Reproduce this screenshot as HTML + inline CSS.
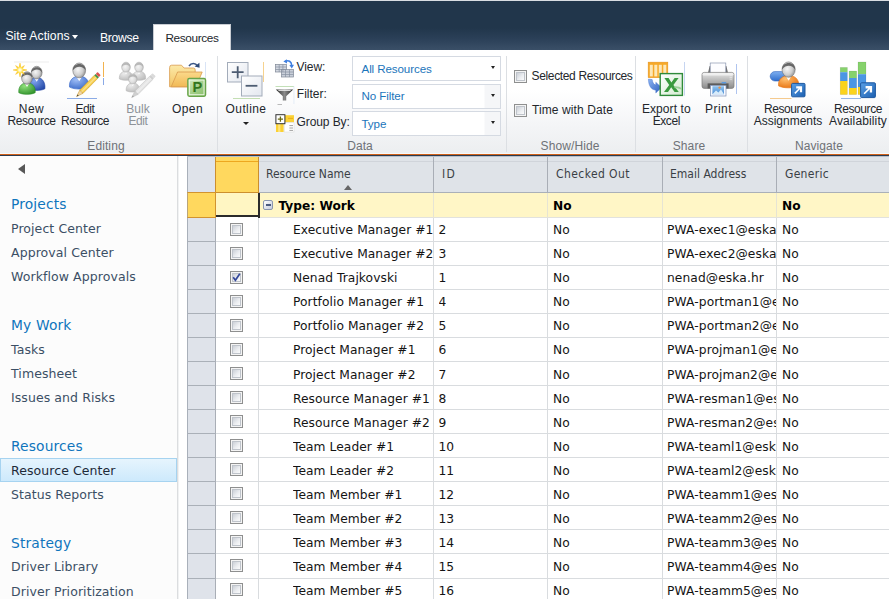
<!DOCTYPE html>
<html><head><meta charset="utf-8"><title>Resource Center</title>
<style>
html,body{margin:0;padding:0}
body{width:889px;height:599px;overflow:hidden;position:relative;background:#fff;font-family:"Liberation Sans",sans-serif;}
i,b,u,span{font-style:normal;text-decoration:none}
/* ---------- top bar ---------- */
#topbar{position:absolute;left:0;top:0;width:889px;height:50px;background:linear-gradient(#21364b 0,#21364b 27px,#2b4058 38px,#3a4f67 49px,#2c4057 49.5px);border-top:1px solid #d9dde2;box-sizing:border-box}
#topbar .t{position:absolute;color:#fff;font-size:12.2px;letter-spacing:-0.1px;white-space:nowrap;line-height:14px}
#tab{position:absolute;left:153px;top:24px;width:78px;height:27px;background:#fff;border:1px solid #c9cdd3;border-bottom:0;box-sizing:border-box}
#tab span{position:absolute;left:0;width:100%;text-align:center;top:6px;font-size:11.8px;color:#23272c;line-height:14px;letter-spacing:-0.36px}
.dd{position:absolute;width:0;height:0;border-left:3.5px solid transparent;border-right:3.5px solid transparent;border-top:4px solid #fff}
/* ---------- ribbon ---------- */
#ribbon{position:absolute;left:0;top:50px;width:889px;height:104px;background:linear-gradient(#fff 0,#fff 40px,#f4f5f7 75px,#eceef0 104px);}
#rline0{position:absolute;left:0;top:153px;width:889px;height:1px;background:#f7f8f9}
#rline1{position:absolute;left:0;top:154px;width:889px;height:1px;background:#cf5f18}
#rline2{position:absolute;left:0;top:155px;width:889px;height:1px;background:#2a3a4e}
.sep{position:absolute;top:56px;width:1px;height:96px;background:#dcdfe3}
.big{position:absolute;top:102.5px;width:80px;text-align:center;font-size:12px;line-height:12px;color:#23272c;letter-spacing:-0.42px;white-space:nowrap}
.big.dis{color:#8d9299}
.glabel{position:absolute;top:139px;width:100px;text-align:center;font-size:12px;line-height:14px;color:#6e7277;letter-spacing:0.1px;white-space:nowrap}
.ico{position:absolute;width:32px;height:32px}
.lbl{position:absolute;font-size:12px;line-height:14px;color:#23272c;letter-spacing:-0.32px;white-space:nowrap}
.sel{position:absolute;left:352px;width:149px;height:25px;box-sizing:border-box;border:1px solid #d5dae2;background:#fff}
.sel.g{background:linear-gradient(90deg,#fff 0,#fff 131px,#f5f6f8 132px)}
.sel span{position:absolute;left:8.5px;top:5px;font-size:11.6px;line-height:14px;color:#1b75bb;letter-spacing:-0.1px;white-space:nowrap}
.sel i{position:absolute;right:4.6px;top:9.4px;width:0;height:0;border-left:2.9px solid transparent;border-right:2.9px solid transparent;border-top:3.4px solid #222}
.chk{position:absolute;left:514px;width:13px;height:13px;box-sizing:border-box;border:1px solid #8e8f8f;background:linear-gradient(135deg,#c4c9d1 10%,#eceef1 55%,#fff 90%);box-shadow:inset 0 0 0 1px #f4f4f4, inset 0 0 0 2px #bfc4cb}
/* ---------- sidebar ---------- */
#side{position:absolute;left:0;top:156px;width:177px;height:443px;background:#fcfcfc;border-right:1px solid #dbdddf}
#side2{position:absolute;left:178px;top:156px;width:1px;height:443px;background:#f1f2f3}
#side .h{position:absolute;left:11px;font-family:"DejaVu Sans",sans-serif;font-size:13.8px;letter-spacing:0.15px;color:#0f75bd;line-height:18px;white-space:nowrap}
#side .a{position:absolute;left:11px;font-family:"DejaVu Sans",sans-serif;font-size:12.5px;letter-spacing:0.08px;color:#3b4f65;line-height:16px;white-space:nowrap}
#side .cur{position:absolute;left:0;top:302px;width:177px;height:24px;box-sizing:border-box;border:1px solid #a6d3f0;background:linear-gradient(#e6f4fd,#cde9fc)}
#back{position:absolute;left:18.3px;top:164px;width:0;height:0;border-top:5px solid transparent;border-bottom:5px solid transparent;border-right:7px solid #585858}
/* ---------- grid ---------- */
#grid{position:absolute;left:0;top:0;width:889px;height:599px;font-family:"DejaVu Sans",sans-serif;font-size:12.25px;color:#141414;overflow:hidden}
.rh{position:absolute;left:187px;width:29px;background:#dfe3ea;border-left:1px solid #a9b0ba;border-right:1px solid #c98a2a;box-sizing:border-box}
.hsel{position:absolute;left:215px;top:157px;width:44px;height:36px;box-sizing:border-box;background:#ffd85e;border:1px solid #cc8f2e;border-top:0}
.hsel:before{content:"";position:absolute;left:0;right:0;top:4px;height:1px;background:#eda71f}
.hdr{position:absolute;top:157px;height:35px;background:#dfe3e8;border-bottom:1px solid #aab0b8;border-right:1px solid #a9aeb6;font-family:"DejaVu Sans Condensed","DejaVu Sans",sans-serif;font-size:12px;color:#3a3f45}
.hdr:before{content:"";position:absolute;left:0;right:0;top:4px;height:1px;background:#d0d4da}
.hdr span{position:absolute;left:7px;top:10px;line-height:14px;white-space:nowrap}
.sort{position:absolute;left:85px;top:28px;width:0;height:0;border-left:4px solid transparent;border-right:4px solid transparent;border-bottom:5px solid #666}
.grow{position:absolute;left:0;top:193px;width:889px;height:25px;}
.grow:before{content:"";position:absolute;left:259px;right:0;top:0;height:24px;background:#fff6c6;border-bottom:1px solid #e2e2de}
.grow b{position:absolute;top:6px;line-height:14px;font-weight:bold;color:#000;white-space:nowrap;font-size:12.2px}
.grow u{position:absolute;top:0;width:1px;height:25px;background:#e6e4d4}
.rhsel{position:absolute;left:187px;top:-1px;width:29px;height:26px;box-sizing:border-box;background:#ffd85e;border:1px solid #d2932f;border-left-color:#b9a57a}
.gsel{position:absolute;left:216px;top:0;width:43.6px;height:24px;box-sizing:border-box;background:#fff6c3;border-right:2.6px solid #2b2b2b;border-bottom:2px solid #2b2b2b}
.gsel:after{content:"";position:absolute;right:-2px;bottom:-3px;width:2px;height:1px;background:#2b2b2b}
.coll{position:absolute;left:263px;top:7px;width:10px;height:10px;box-sizing:border-box;border:1px solid #8a96b0;border-radius:2px;background:linear-gradient(135deg,#fff,#c4cbdc)}
.coll:before{content:"";position:absolute;left:1.5px;top:3px;width:5px;height:2px;background:#4a5a7e}
.row{position:absolute;left:0;width:889px;height:24px}
.row:after{content:"";position:absolute;left:187px;right:0;bottom:0;height:1px;background:#d9dcdf}
.row span{position:absolute;top:5px;line-height:14px;white-space:nowrap;overflow:hidden}
.rh2{position:absolute;left:187px;top:0;width:29px;height:24px;background:#dfe3ea;border-left:1px solid #a9b0ba;border-right:1px solid #a9aeb6;border-bottom:1px solid #aab0b8;box-sizing:border-box;z-index:2}
.c1{left:293px;width:140px;letter-spacing:0.06px}.c2{left:438.5px}.c3{left:553px}.c4{left:667px;width:109px;letter-spacing:0.1px}.c5{left:782px}
.cb{position:absolute;left:230px;top:5px;width:13px;height:13px;box-sizing:border-box;border:1px solid #8e8f8f;background:linear-gradient(135deg,#c4c9d1 10%,#eceef1 55%,#fff 90%);box-shadow:inset 0 0 0 1px #f4f4f4, inset 0 0 0 2px #bfc4cb}
.cb svg{position:absolute;left:-1px;top:-1px;width:13px;height:13px}
.vl{position:absolute;top:218px;width:1px;height:382px;background:#d9dcdf}

#gtop{position:absolute;left:187px;top:156px;width:702px;height:1px;background:#b7bec9}
#side .a.on{color:#1e2a38}

</style></head><body>
<div id="topbar">
<span class="t" style="left:5.4px;top:28px;letter-spacing:0.05px">Site Actions</span><i class="dd" style="left:72.4px;top:34.4px"></i>
<span class="t" style="left:100px;top:30px;letter-spacing:-0.3px">Browse</span>
</div>
<div id="tab"><span>Resources</span></div>
<div id="ribbon"></div>
<div id="rline0"></div><div id="rline1"></div><div id="rline2"></div>
<div class="sep" style="left:217px"></div><div class="sep" style="left:506px"></div><div class="sep" style="left:635px"></div><div class="sep" style="left:747px"></div>
<div class="big" style="left:-8.5px"><span style="letter-spacing:0.5px">New</span><br>Resource</div>
<div class="big" style="left:45px">Edit<br>Resource</div>
<div class="big dis" style="left:98px"><span style="letter-spacing:0.1px">Bulk</span><br>Edit</div>
<div class="big" style="left:147.5px"><span style="letter-spacing:0.4px">Open</span></div>
<div class="big" style="left:206px"><span style="letter-spacing:0.4px">Outline</span></div><i class="dd" style="left:242.9px;top:121.8px;border-top-color:#222;border-width:3.5px 3px 0 3px"></i>
<div class="big" style="left:626.3px"><span style="letter-spacing:0.08px">Export to</span><br>Excel</div>
<div class="big" style="left:678.5px"><span style="letter-spacing:0.5px">Print</span></div>
<div class="big" style="left:748px">Resource<br><span style="letter-spacing:0px">Assignments</span></div>
<div class="big" style="left:818px">Resource<br><span style="letter-spacing:0.13px">Availability</span></div>
<div class="glabel" style="left:56px">Editing</div>
<div class="glabel" style="left:310px">Data</div>
<div class="glabel" style="left:520px">Show/Hide</div>
<div class="glabel" style="left:639px">Share</div>
<div class="glabel" style="left:769px">Navigate</div>
<span class="lbl" style="left:296.6px;top:60px;letter-spacing:-0.1px">View:</span>
<span class="lbl" style="left:296.8px;top:87px;letter-spacing:0px">Filter:</span>
<span class="lbl" style="left:296.6px;top:115px;letter-spacing:-0.1px">Group By:</span>
<div class="sel" style="top:56px"><span>All Resources</span><i></i></div>
<div class="sel g" style="top:84px"><span style="top:4px">No Filter</span><i></i></div>
<div class="sel g" style="top:111px"><span>Type</span><i></i></div>
<i class="chk" style="top:70px"></i><span class="lbl" style="left:531.6px;top:69px;letter-spacing:-0.36px">Selected Resources</span>
<i class="chk" style="top:104px"></i><span class="lbl" style="left:532px;top:103px;letter-spacing:0.1px">Time with Date</span>

<svg id="icons" width="889" height="160" viewBox="0 0 889 160" style="position:absolute;left:0;top:0;pointer-events:none"><defs><radialGradient id="p1h" cx="0.4" cy="0.45" r="0.7"><stop offset="0" stop-color="#f6f6f6"/><stop offset="0.55" stop-color="#cfcfcf"/><stop offset="1" stop-color="#7c7c7c"/></radialGradient><radialGradient id="p1b" cx="0.35" cy="0.3" r="0.8"><stop offset="0" stop-color="#7fa4ee"/><stop offset="1" stop-color="#2347a5"/></radialGradient><radialGradient id="p2h" cx="0.4" cy="0.45" r="0.7"><stop offset="0" stop-color="#f6f6f6"/><stop offset="0.55" stop-color="#cfcfcf"/><stop offset="1" stop-color="#7c7c7c"/></radialGradient><radialGradient id="p2b" cx="0.35" cy="0.3" r="0.8"><stop offset="0" stop-color="#8fe07a"/><stop offset="1" stop-color="#2e8f2a"/></radialGradient><radialGradient id="p3h" cx="0.4" cy="0.45" r="0.7"><stop offset="0" stop-color="#f6f6f6"/><stop offset="0.55" stop-color="#cfcfcf"/><stop offset="1" stop-color="#7c7c7c"/></radialGradient><radialGradient id="p3b" cx="0.35" cy="0.3" r="0.8"><stop offset="0" stop-color="#9dbcf5"/><stop offset="1" stop-color="#3868c8"/></radialGradient><radialGradient id="p4h" cx="0.4" cy="0.45" r="0.7"><stop offset="0" stop-color="#f4f4f4"/><stop offset="0.55" stop-color="#dedede"/><stop offset="1" stop-color="#b4b4b4"/></radialGradient><radialGradient id="p4b" cx="0.35" cy="0.3" r="0.8"><stop offset="0" stop-color="#ececec"/><stop offset="1" stop-color="#b9b9b9"/></radialGradient><radialGradient id="p5h" cx="0.4" cy="0.45" r="0.7"><stop offset="0" stop-color="#f4f4f4"/><stop offset="0.55" stop-color="#dedede"/><stop offset="1" stop-color="#b4b4b4"/></radialGradient><radialGradient id="p5b" cx="0.35" cy="0.3" r="0.8"><stop offset="0" stop-color="#ececec"/><stop offset="1" stop-color="#b9b9b9"/></radialGradient><radialGradient id="p6h" cx="0.4" cy="0.45" r="0.7"><stop offset="0" stop-color="#f4f4f4"/><stop offset="0.55" stop-color="#dedede"/><stop offset="1" stop-color="#b4b4b4"/></radialGradient><radialGradient id="p6b" cx="0.35" cy="0.3" r="0.8"><stop offset="0" stop-color="#ececec"/><stop offset="1" stop-color="#b9b9b9"/></radialGradient><linearGradient id="fo1" x1="0" y1="0" x2="0" y2="1"><stop offset="0" stop-color="#fce9a8"/><stop offset="1" stop-color="#f3c565"/></linearGradient><linearGradient id="fo2" x1="0" y1="0" x2="0" y2="1"><stop offset="0" stop-color="#fbd98a"/><stop offset="1" stop-color="#f1b955"/></linearGradient><linearGradient id="pg" x1="0" y1="0" x2="1" y2="1"><stop offset="0" stop-color="#d9ecc9"/><stop offset="0.5" stop-color="#a5d08a"/><stop offset="1" stop-color="#86bd68"/></linearGradient><linearGradient id="ob" x1="0" y1="0" x2="1" y2="1"><stop offset="0" stop-color="#fff"/><stop offset="1" stop-color="#e3e7ef"/></linearGradient><linearGradient id="fu" x1="0" y1="0" x2="1" y2="0"><stop offset="0" stop-color="#2a2a2a"/><stop offset="0.5" stop-color="#8a8a8a"/><stop offset="1" stop-color="#2a2a2a"/></linearGradient><linearGradient id="xa" x1="0" y1="0" x2="1" y2="1"><stop offset="0" stop-color="#8db4f0"/><stop offset="1" stop-color="#2c5fc0"/></linearGradient><linearGradient id="xg" x1="0" y1="0" x2="1" y2="1"><stop offset="0" stop-color="#fff"/><stop offset="1" stop-color="#d3ead0"/></linearGradient><linearGradient id="pr" x1="0" y1="0" x2="0" y2="1"><stop offset="0" stop-color="#e9e9e9"/><stop offset="0.45" stop-color="#bdbdbd"/><stop offset="1" stop-color="#8b8b8b"/></linearGradient><linearGradient id="pp" x1="0" y1="0" x2="0" y2="1"><stop offset="0" stop-color="#8fc2ee"/><stop offset="1" stop-color="#4e8fd6"/></linearGradient><linearGradient id="pill" x1="0" y1="0" x2="0" y2="1"><stop offset="0" stop-color="#7fb0f0"/><stop offset="1" stop-color="#2f6dcc"/></linearGradient><radialGradient id="p7h" cx="0.4" cy="0.45" r="0.7"><stop offset="0" stop-color="#f6f6f6"/><stop offset="0.55" stop-color="#cfcfcf"/><stop offset="1" stop-color="#7c7c7c"/></radialGradient><radialGradient id="p7b" cx="0.35" cy="0.3" r="0.8"><stop offset="0" stop-color="#ffc070"/><stop offset="1" stop-color="#e66f0c"/></radialGradient><linearGradient id="sc1" x1="0" y1="0" x2="1" y2="1"><stop offset="0" stop-color="#5aa0e6"/><stop offset="1" stop-color="#1c5fb0"/></linearGradient><linearGradient id="sc2" x1="0" y1="0" x2="1" y2="1"><stop offset="0" stop-color="#5aa0e6"/><stop offset="1" stop-color="#1c5fb0"/></linearGradient></defs><path d="M28.5 88.8 C27.7 81.3 32.2 77.3 36.7 77.3 C41.2 77.3 45.7 81.3 44.9 88.8 C40.8 91.0 32.6 91.0 28.5 88.8Z" fill="url(#p1b)" stroke="#2347a5" stroke-width="0.6"/><path d="M34.3 77.9 L36.7 81.7 L39.1 77.9Z" fill="#fff" opacity="0.95"/><ellipse cx="36.7" cy="72.6" rx="5.4" ry="6.3" fill="url(#p1h)" stroke="#777" stroke-width="0.6"/><path d="M31.3 72.4 C31.3 65.4 42.1 65.4 42.1 72.4 C39.9 69.1 35.1 67.9 31.3 72.4Z" fill="#555" opacity="0.85"/><path d="M18.8 92.7 C18.0 86.2 22.5 82.7 27.0 82.7 C31.5 82.7 36.0 86.2 35.2 92.7 C31.1 94.9 22.9 94.9 18.8 92.7Z" fill="url(#p2b)" stroke="#2e8f2a" stroke-width="0.6"/><path d="M24.6 83.3 L27.0 87.1 L29.4 83.3Z" fill="#fff" opacity="0.95"/><ellipse cx="27.0" cy="78.0" rx="5.4" ry="6.3" fill="url(#p2h)" stroke="#777" stroke-width="0.6"/><path d="M21.6 77.8 C21.6 70.8 32.4 70.8 32.4 77.8 C30.2 74.5 25.4 73.3 21.6 77.8Z" fill="#555" opacity="0.85"/><path d="M22.2 71.0 L26.9 70.0 L22.2 69.0Z" fill="#ffd42a" stroke="#f6bf1e" stroke-width="0.5"/><path d="M20.9 72.2 L24.4 74.4 L22.2 70.9Z" fill="#ffd42a" stroke="#f6bf1e" stroke-width="0.5"/><path d="M19.0 72.2 L20.0 76.9 L21.0 72.2Z" fill="#ffd42a" stroke="#f6bf1e" stroke-width="0.5"/><path d="M17.8 70.9 L15.6 74.4 L19.1 72.2Z" fill="#ffd42a" stroke="#f6bf1e" stroke-width="0.5"/><path d="M17.8 69.0 L13.1 70.0 L17.8 71.0Z" fill="#ffd42a" stroke="#f6bf1e" stroke-width="0.5"/><path d="M19.1 67.8 L15.6 65.6 L17.8 69.1Z" fill="#ffd42a" stroke="#f6bf1e" stroke-width="0.5"/><path d="M21.0 67.8 L20.0 63.1 L19.0 67.8Z" fill="#ffd42a" stroke="#f6bf1e" stroke-width="0.5"/><path d="M22.2 69.1 L24.4 65.6 L20.9 67.8Z" fill="#ffd42a" stroke="#f6bf1e" stroke-width="0.5"/><circle cx="20" cy="70" r="3" fill="#ffe86a"/><circle cx="20" cy="70" r="1.8" fill="#fffbe0"/><rect x="14" y="61.6" width="35" height="0.8" fill="#e9e9e9"/><path d="M69.5 87.1 C68.6 79.9 73.9 76.0 79.2 76.0 C84.5 76.0 89.8 79.9 88.9 87.1 C84.0 89.7 74.4 89.7 69.5 87.1Z" fill="url(#p3b)" stroke="#3868c8" stroke-width="0.6"/><path d="M76.4 76.7 L79.2 81.2 L82.0 76.7Z" fill="#fff" opacity="0.95"/><ellipse cx="79.2" cy="70.4" rx="6.4" ry="7.4" fill="url(#p3h)" stroke="#777" stroke-width="0.6"/><path d="M72.8 70.2 C72.8 61.9 85.6 61.9 85.6 70.2 C83.0 66.3 77.3 64.8 72.8 70.2Z" fill="#555" opacity="0.85"/><g transform="translate(76.6 96.6) rotate(-45.5)"><path d="M0 0 L6.9 -2.3 L6.9 2.3Z" fill="#f1d6a6" stroke="#c9962a" stroke-width="0.5"/><path d="M0 0 L2.3 -0.8 L2.3 0.8Z" fill="#3a3a3a"/><rect x="6.9" y="-2.3" width="20.8" height="4.6" fill="#f7cf4d" stroke="#c9962a" stroke-width="0.5"/><rect x="6.9" y="-0.6" width="20.8" height="1.4" fill="#fff" opacity="0.35"/><rect x="27.7" y="-2.3" width="1.8" height="4.6" fill="#3f9a4a"/><rect x="29.5" y="-2.3" width="2.7" height="4.6" rx="0.8" fill="#d9534f"/></g><rect x="103" y="62" width="1" height="15" fill="#f2b24d"/><rect x="103" y="78" width="1" height="7" fill="#8aa9e6"/><rect x="67" y="98" width="30" height="0.8" fill="#6f97e0"/><path d="M119.4 79.0 C118.8 73.8 122.4 71.0 126.0 71.0 C129.6 71.0 133.2 73.8 132.6 79.0 C129.3 80.7 122.7 80.7 119.4 79.0Z" fill="url(#p4b)" stroke="#b9b9b9" stroke-width="0.6"/><path d="M124.1 71.5 L126.0 74.5 L127.9 71.5Z" fill="#fff" opacity="0.95"/><ellipse cx="126.0" cy="67.2" rx="4.3" ry="5.0" fill="url(#p4h)" stroke="#b0b0b0" stroke-width="0.6"/><path d="M121.7 67.0 C121.7 61.4 130.3 61.4 130.3 67.0 C128.6 64.4 124.7 63.4 121.7 67.0Z" fill="#b0b0b0" opacity="0.85"/><path d="M132.4 79.0 C131.8 73.8 135.4 71.0 139.0 71.0 C142.6 71.0 146.2 73.8 145.6 79.0 C142.3 80.7 135.7 80.7 132.4 79.0Z" fill="url(#p5b)" stroke="#b9b9b9" stroke-width="0.6"/><path d="M137.1 71.5 L139.0 74.5 L140.9 71.5Z" fill="#fff" opacity="0.95"/><ellipse cx="139.0" cy="67.2" rx="4.3" ry="5.0" fill="url(#p5h)" stroke="#b0b0b0" stroke-width="0.6"/><path d="M134.7 67.0 C134.7 61.4 143.3 61.4 143.3 67.0 C141.6 64.4 137.7 63.4 134.7 67.0Z" fill="#b0b0b0" opacity="0.85"/><path d="M126.2 90.8 C125.6 85.6 129.2 82.8 132.8 82.8 C136.4 82.8 140.0 85.6 139.4 90.8 C136.1 92.5 129.5 92.5 126.2 90.8Z" fill="url(#p6b)" stroke="#b9b9b9" stroke-width="0.6"/><path d="M130.9 83.3 L132.8 86.3 L134.7 83.3Z" fill="#fff" opacity="0.95"/><ellipse cx="132.8" cy="79.0" rx="4.3" ry="5.0" fill="url(#p6h)" stroke="#b0b0b0" stroke-width="0.6"/><path d="M128.5 78.8 C128.5 73.2 137.1 73.2 137.1 78.8 C135.4 76.2 131.5 75.2 128.5 78.8Z" fill="#b0b0b0" opacity="0.85"/><g transform="translate(131.7 97.6) rotate(-45.4)"><path d="M0 0 L6.9 -2.3 L6.9 2.3Z" fill="#d0d0d0" stroke="#bdbdbd" stroke-width="0.5"/><path d="M0 0 L2.3 -0.8 L2.3 0.8Z" fill="#999"/><rect x="6.9" y="-2.3" width="20.6" height="4.6" fill="#e4e4e4" stroke="#bdbdbd" stroke-width="0.5"/><rect x="6.9" y="-0.6" width="20.6" height="1.4" fill="#fff" opacity="0.35"/><rect x="27.5" y="-2.3" width="1.8" height="4.6" fill="#cfcfcf"/><rect x="29.3" y="-2.3" width="2.7" height="4.6" rx="0.8" fill="#dadada"/></g><path d="M169.6 67.5 Q169.6 65.2 171.6 65.2 L181.5 65.2 L184 68 L193.5 68 Q195.2 68 195.2 70 L195.2 86.8 L169.6 86.8Z" fill="url(#fo1)" stroke="#d99a4e" stroke-width="0.8"/><path d="M171.2 86.8 L177.6 72 L202.2 72 L196 86.8Z" fill="url(#fo2)" stroke="#d99a4e" stroke-width="0.8"/><path d="M189 66 C191.2 62.8 195.4 62.8 197.4 65.8" fill="none" stroke="#3a5686" stroke-width="1.6"/><path d="M194.6 66.6 L199.6 67.8 L199.4 62.8Z" fill="#2f4a78"/><rect x="205.3" y="62" width="0.7" height="16" fill="#c9d8f2"/><rect x="187.8" y="78.5" width="17.8" height="17.8" rx="1.5" fill="url(#pg)" stroke="#68a44a" stroke-width="1.3"/><rect x="189.4" y="80.1" width="14.6" height="14.6" fill="none" stroke="#eef7e6" stroke-width="0.9"/><text x="197.3" y="92.2" font-family="Liberation Sans, sans-serif" font-weight="bold" font-size="14.6" text-anchor="middle" fill="#33751c">P</text><rect x="227.5" y="62.5" width="20.5" height="19.5" fill="url(#ob)" stroke="#a3acba" stroke-width="1"/><path d="M231.8 72.2 H243.6 M237.7 66.2 V78.2" stroke="#4d5c72" stroke-width="1.8" fill="none"/><rect x="241.5" y="76" width="20.5" height="20" fill="url(#ob)" stroke="#a3acba" stroke-width="1"/><path d="M245.6 85.8 H257.4" stroke="#4d5c72" stroke-width="1.8" fill="none"/><rect x="263" y="62" width="0.8" height="20" fill="#f4c772"/><rect x="233" y="98" width="27" height="0.8" fill="#b5d6a0"/><g stroke="#7f8896" stroke-width="0.7" fill="#d3d8e0"><rect x="275.5" y="64.5" width="11" height="7.5"/><rect x="281.5" y="69.5" width="12" height="7.5" fill="#c9cfd9"/></g><path d="M275.5 67 H286.5 M275.5 69.5 H286.5 M279.2 64.5 V72 M282.9 64.5 V72 M281.5 72 H293.5 M281.5 74.5 H293.5 M285.5 69.5 V77 M289.5 69.5 V77" stroke="#8790a0" stroke-width="0.7" fill="none"/><path d="M285.4 61.4 C288.4 59.6 291.6 61.4 291.7 65.6" fill="none" stroke="#3f7fe0" stroke-width="1.5"/><path d="M289.4 65 L291.8 68.4 L294 64.8Z" fill="#3f7fe0"/><path d="M286.8 59.2 L283.4 61.4 L287 63.4Z" fill="#3f7fe0"/><path d="M275.8 89.4 L293.2 89.4 L286.2 96.2 L286.2 100.6 L282.8 100.6 L282.8 96.2Z" fill="url(#fu)"/><path d="M278.4 90.4 L290.6 90.4" stroke="#e8e8e8" stroke-width="1"/><rect x="275.5" y="86" width="18.5" height="0.7" fill="#a9d39a"/><rect x="277.5" y="104" width="4.5" height="0.8" fill="#aaa"/><rect x="293.6" y="86" width="0.7" height="18" fill="#dbe6f5"/><rect x="276" y="115.2" width="18" height="7" fill="#fbd134"/><rect x="276" y="115.5" width="7.6" height="16.5" fill="#fbd134"/><rect x="278.2" y="123" width="2.2" height="9" fill="#fde480"/><rect x="284.2" y="122.8" width="9.8" height="9.2" fill="#fff" stroke="#d8d8d8" stroke-width="0.5"/><path d="M289.4 125.6 H293 M289.4 128 H293 M289.4 130.4 H293" stroke="#8a8a8a" stroke-width="0.8"/><path d="M288 118.4 H293" stroke="#e6a91c" stroke-width="0.9"/><rect x="275.9" y="114.7" width="9" height="9" fill="#fff" stroke="#333" stroke-width="1"/><path d="M277.8 119.2 H283 M280.4 116.6 V121.8" stroke="#6b6a12" stroke-width="1.3"/><rect x="648.2" y="62.2" width="19.6" height="15.4" fill="#f6a928" stroke="#e8931a" stroke-width="0.6"/><rect x="649.8" y="64.8" width="3" height="11.6" fill="#fde8b8"/><rect x="654.3" y="64.8" width="3" height="11.6" fill="#fde8b8"/><rect x="658.8" y="64.8" width="3" height="11.6" fill="#fde8b8"/><rect x="663.3" y="64.8" width="3" height="11.6" fill="#fde8b8"/><path d="M648.4 79 L652.2 79.6 C652.6 83 654 84.6 655.8 85 L655.8 82.2 L661.6 87.6 L655.8 93 L655.8 90.2 C651.2 89.8 648.4 85.6 648.4 79Z" fill="url(#xa)" stroke="#3f6fd0" stroke-width="0.4"/><rect x="660.2" y="73.6" width="22.2" height="21.8" fill="url(#xg)" stroke="#2f8a3a" stroke-width="1.4"/><path d="M664.4 78 L668.6 78 L671.4 82.6 L674.6 78 L678.6 78 L673.4 85 L678.8 92 L674.6 92 L671.2 87.2 L668 92 L664 92 L669.2 85Z" fill="#3a9a3f"/><path d="M674 86.5 C677 86 680 87 682 88.5 L682 90 C679.5 88.3 677 88 674.8 88.2Z" fill="#9ccf9a"/><rect x="684" y="62" width="0.8" height="33.5" fill="#b8cbee"/><path d="M708 73 L709.6 66 L726.4 66 L728 73Z" fill="#6d6d6d"/><rect x="710.2" y="63" width="15.6" height="10.4" fill="#fdfdff" stroke="#8a96b0" stroke-width="0.7"/><rect x="702" y="72.4" width="32" height="16" rx="2.2" fill="url(#pr)" stroke="#7c7c7c" stroke-width="0.7"/><rect x="702.6" y="73" width="30.8" height="2.4" rx="1.2" fill="#f4f4f4" opacity="0.8"/><rect x="707.6" y="83.4" width="21" height="5" fill="#5c5c5c"/><rect x="721.6" y="82" width="4.6" height="1.5" fill="#5b9ae0"/><path d="M729.6 75.6 H732 M729.6 77.4 H732 M729.6 79.2 H732" stroke="#eee" stroke-width="0.7"/><rect x="710.4" y="85.4" width="15.6" height="10.6" fill="#f6f8ff" stroke="#7c8fb4" stroke-width="0.7"/><rect x="712.4" y="86.2" width="11.6" height="8" fill="url(#pp)"/><path d="M712.4 94.2 L716 90.4 L718.4 92.4 L721 89.6 L724 94.2Z" fill="#d8ecfb"/><circle cx="719.6" cy="87.6" r="1.2" fill="#e8944a"/><rect x="736" y="64" width="0.8" height="30" fill="#9bb6ec"/><rect x="770.2" y="71.6" width="16" height="9.4" rx="4.7" fill="url(#pill)" stroke="#3467bd" stroke-width="0.6"/><path d="M778.6 85.9 C777.6 79.0 783.1 75.4 788.6 75.4 C794.1 75.4 799.6 79.0 798.6 85.9 C793.6 88.5 783.6 88.5 778.6 85.9Z" fill="url(#p7b)" stroke="#e66f0c" stroke-width="0.6"/><path d="M785.7 76.1 L788.6 80.7 L791.5 76.1Z" fill="#fff" opacity="0.95"/><ellipse cx="788.6" cy="69.6" rx="6.6" ry="7.7" fill="url(#p7h)" stroke="#777" stroke-width="0.6"/><path d="M782.0 69.4 C782.0 60.8 795.2 60.8 795.2 69.4 C792.6 65.4 786.6 63.8 782.0 69.4Z" fill="#555" opacity="0.85"/><rect x="791.6" y="83.4" width="13.4" height="13.4" rx="1" fill="url(#sc1)" stroke="#1d58a0" stroke-width="1"/><path d="M795.4 93.9 L799.9 89.3 L799.9 92.2 L802.1 92.2 L802.1 86.3 L796.2 86.3 L796.2 88.5 L798.6 88.5 L794.3 92.8Z" fill="#fff"/><rect x="770" y="98" width="21.5" height="0.8" fill="#f3bd72"/><rect x="840.2" y="67.4" width="7.2" height="4.8" fill="#86d26c"/><rect x="840.2" y="72.2" width="7.2" height="8.8" fill="#4b96e4"/><rect x="840.2" y="81" width="7.2" height="13.6" fill="#fbd31c"/><rect x="840.2" y="67.4" width="7.2" height="27.2" fill="none" stroke="#000" stroke-opacity="0.12" stroke-width="0.6"/><rect x="849.1" y="71" width="7.6" height="7.0" fill="#86d26c"/><rect x="849.1" y="78" width="7.6" height="10.0" fill="#4b96e4"/><rect x="849.1" y="88" width="7.6" height="6.6" fill="#fbd31c"/><rect x="849.1" y="71" width="7.6" height="23.6" fill="none" stroke="#000" stroke-opacity="0.12" stroke-width="0.6"/><rect x="858" y="62" width="8" height="12.2" fill="#86d26c"/><rect x="858" y="74.2" width="8" height="12.8" fill="#4b96e4"/><rect x="858" y="87" width="8" height="7.6" fill="#fbd31c"/><rect x="858" y="62" width="8" height="32.6" fill="none" stroke="#000" stroke-opacity="0.12" stroke-width="0.6"/><rect x="860.6" y="82.8" width="14.8" height="14.8" rx="1" fill="url(#sc2)" stroke="#1d58a0" stroke-width="1"/><path d="M864.7 94.3 L869.8 89.3 L869.8 92.6 L872.1 92.6 L872.1 86.1 L865.6 86.1 L865.6 88.4 L868.3 88.4 L863.6 93.2Z" fill="#fff"/><rect x="841" y="98" width="20" height="0.8" fill="#7ea6df"/></svg>
<div id="side">
<div class="cur"></div>
<span class="h" style="top:39px">Projects</span>
<span class="a" style="top:65px">Project Center</span>
<span class="a" style="top:89px">Approval Center</span>
<span class="a" style="top:113px">Workflow Approvals</span>
<span class="h" style="top:160px">My Work</span>
<span class="a" style="top:186px">Tasks</span>
<span class="a" style="top:210px">Timesheet</span>
<span class="a" style="top:234px">Issues and Risks</span>
<span class="h" style="top:281px">Resources</span>
<span class="a on" style="top:307px">Resource Center</span>
<span class="a" style="top:331px">Status Reports</span>
<span class="h" style="top:378px">Strategy</span>
<span class="a" style="top:403px">Driver Library</span>
<span class="a" style="top:428px">Driver Prioritization</span>
</div>
<div id="side2"></div>
<i id="back"></i>
<div id="grid">
<div id="gtop"></div><div class="rh" style="top:157px;height:36px"></div>
<div class="hsel"></div>
<div class="hdr" style="left:259px;width:174px"><span>Resource Name</span><i class="sort"></i></div>
<div class="hdr" style="left:434px;width:113px"><span style="left:8px;letter-spacing:1.4px">ID</span></div>
<div class="hdr" style="left:548px;width:114px"><span style="left:8px;letter-spacing:0.42px">Checked Out</span></div>
<div class="hdr" style="left:663px;width:113px"><span>Email Address</span></div>
<div class="hdr" style="left:777px;width:112px"><span style="left:8px;letter-spacing:0.3px">Generic</span></div>
<div class="grow">
<div class="rhsel"></div><div class="gsel"></div>
<i class="coll"></i><b style="left:278.5px">Type: Work</b><b style="left:553px">No</b><b style="left:782px">No</b>
<u style="left:433px"></u><u style="left:547px"></u><u style="left:662px"></u><u style="left:776px"></u>
</div>
<div class="row" style="top:218px;height:24px"><div class="rh2" style="height:24px"></div><i class="cb" style="top:5px"></i><span class="c1" style="top:5px">Executive Manager #1</span><span class="c2" style="top:5px">2</span><span class="c3" style="top:5px">No</span><span class="c4" style="top:5px">PWA-exec1@eska.hr</span><span class="c5" style="top:5px">No</span></div>
<div class="row" style="top:242px;height:24px"><div class="rh2" style="height:24px"></div><i class="cb" style="top:5px"></i><span class="c1" style="top:5px">Executive Manager #2</span><span class="c2" style="top:5px">3</span><span class="c3" style="top:5px">No</span><span class="c4" style="top:5px">PWA-exec2@eska.hr</span><span class="c5" style="top:5px">No</span></div>
<div class="row" style="top:266px;height:24px"><div class="rh2" style="height:24px"></div><i class="cb" style="top:5px"><svg viewBox="0 0 13 13"><path d="M3.2 6.2 L5.4 9.2 L9.8 2.8" fill="none" stroke="#33479a" stroke-width="1.7"/></svg></i><span class="c1" style="top:5px">Nenad Trajkovski</span><span class="c2" style="top:5px">1</span><span class="c3" style="top:5px">No</span><span class="c4" style="top:5px">nenad@eska.hr</span><span class="c5" style="top:5px">No</span></div>
<div class="row" style="top:290px;height:24px"><div class="rh2" style="height:24px"></div><i class="cb" style="top:5px"></i><span class="c1" style="top:5px">Portfolio Manager #1</span><span class="c2" style="top:5px">4</span><span class="c3" style="top:5px">No</span><span class="c4" style="top:5px">PWA-portman1@eska.hr</span><span class="c5" style="top:5px">No</span></div>
<div class="row" style="top:314px;height:24px"><div class="rh2" style="height:24px"></div><i class="cb" style="top:5px"></i><span class="c1" style="top:5px">Portfolio Manager #2</span><span class="c2" style="top:5px">5</span><span class="c3" style="top:5px">No</span><span class="c4" style="top:5px">PWA-portman2@eska.hr</span><span class="c5" style="top:5px">No</span></div>
<div class="row" style="top:338px;height:24px"><div class="rh2" style="height:24px"></div><i class="cb" style="top:5px"></i><span class="c1" style="top:5px">Project Manager #1</span><span class="c2" style="top:5px">6</span><span class="c3" style="top:5px">No</span><span class="c4" style="top:5px">PWA-projman1@eska.hr</span><span class="c5" style="top:5px">No</span></div>
<div class="row" style="top:362px;height:24px"><div class="rh2" style="height:24px"></div><i class="cb" style="top:5px"></i><span class="c1" style="top:6px">Project Manager #2</span><span class="c2" style="top:6px">7</span><span class="c3" style="top:6px">No</span><span class="c4" style="top:6px">PWA-projman2@eska.hr</span><span class="c5" style="top:6px">No</span></div>
<div class="row" style="top:386px;height:24px"><div class="rh2" style="height:24px"></div><i class="cb" style="top:5px"></i><span class="c1" style="top:6px">Resource Manager #1</span><span class="c2" style="top:6px">8</span><span class="c3" style="top:6px">No</span><span class="c4" style="top:6px">PWA-resman1@eska.hr</span><span class="c5" style="top:6px">No</span></div>
<div class="row" style="top:410px;height:24px"><div class="rh2" style="height:24px"></div><i class="cb" style="top:5px"></i><span class="c1" style="top:6px">Resource Manager #2</span><span class="c2" style="top:6px">9</span><span class="c3" style="top:6px">No</span><span class="c4" style="top:6px">PWA-resman2@eska.hr</span><span class="c5" style="top:6px">No</span></div>
<div class="row" style="top:434px;height:24px"><div class="rh2" style="height:24px"></div><i class="cb" style="top:5px"></i><span class="c1" style="top:6px">Team Leader #1</span><span class="c2" style="top:6px">10</span><span class="c3" style="top:6px">No</span><span class="c4" style="top:6px">PWA-teaml1@eska.hr</span><span class="c5" style="top:6px">No</span></div>
<div class="row" style="top:458px;height:24px"><div class="rh2" style="height:24px"></div><i class="cb" style="top:5px"></i><span class="c1" style="top:6px">Team Leader #2</span><span class="c2" style="top:6px">11</span><span class="c3" style="top:6px">No</span><span class="c4" style="top:6px">PWA-teaml2@eska.hr</span><span class="c5" style="top:6px">No</span></div>
<div class="row" style="top:482px;height:24px"><div class="rh2" style="height:24px"></div><i class="cb" style="top:5px"></i><span class="c1" style="top:6px">Team Member #1</span><span class="c2" style="top:6px">12</span><span class="c3" style="top:6px">No</span><span class="c4" style="top:6px">PWA-teamm1@eska.hr</span><span class="c5" style="top:6px">No</span></div>
<div class="row" style="top:506px;height:24px"><div class="rh2" style="height:24px"></div><i class="cb" style="top:5px"></i><span class="c1" style="top:6px">Team Member #2</span><span class="c2" style="top:6px">13</span><span class="c3" style="top:6px">No</span><span class="c4" style="top:6px">PWA-teamm2@eska.hr</span><span class="c5" style="top:6px">No</span></div>
<div class="row" style="top:530px;height:24px"><div class="rh2" style="height:24px"></div><i class="cb" style="top:5px"></i><span class="c1" style="top:6px">Team Member #3</span><span class="c2" style="top:6px">14</span><span class="c3" style="top:6px">No</span><span class="c4" style="top:6px">PWA-teamm3@eska.hr</span><span class="c5" style="top:6px">No</span></div>
<div class="row" style="top:554px;height:25px"><div class="rh2" style="height:25px"></div><i class="cb" style="top:5px"></i><span class="c1" style="top:6px">Team Member #4</span><span class="c2" style="top:6px">15</span><span class="c3" style="top:6px">No</span><span class="c4" style="top:6px">PWA-teamm4@eska.hr</span><span class="c5" style="top:6px">No</span></div>
<div class="row" style="top:579px;height:24px"><div class="rh2" style="height:24px"></div><i class="cb" style="top:4px"></i><span class="c1" style="top:5px">Team Member #5</span><span class="c2" style="top:5px">16</span><span class="c3" style="top:5px">No</span><span class="c4" style="top:5px">PWA-teamm5@eska.hr</span><span class="c5" style="top:5px">No</span></div>
<div class="vl" style="left:258px"></div>
<div class="vl" style="left:433px"></div>
<div class="vl" style="left:547px"></div>
<div class="vl" style="left:662px"></div>
<div class="vl" style="left:776px"></div>
</div>
</body></html>
